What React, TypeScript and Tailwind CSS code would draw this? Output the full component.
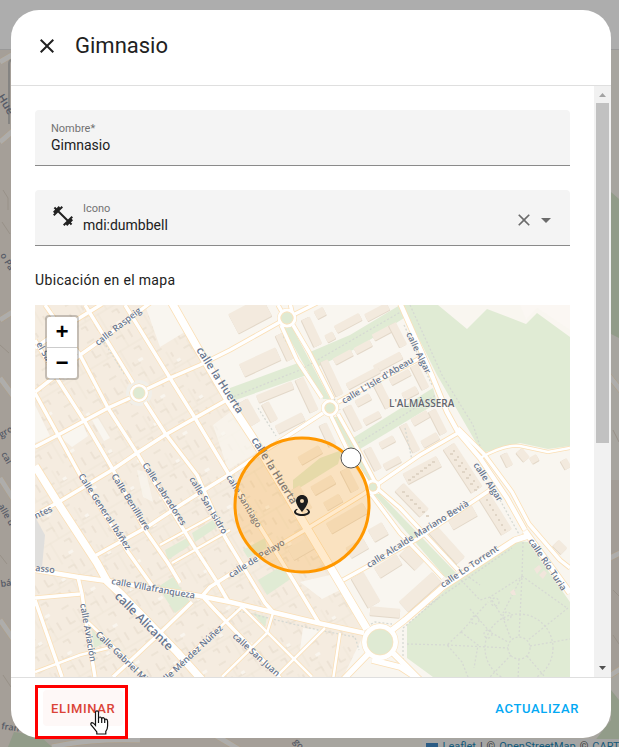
import { useState } from "react"

const roads = [
  { d: "M85 305L133 383M145 402L165 433L197 475L225 537L265 603L273 612", w: 4 },
  { d: "M45 305L80 355L108 408L137 453L150 475L193 545L217 582L228 601", w: 4 },
  { d: "M125 305L170 378L195 418L228 473L262 530L287 570L319 623", w: 4 },
  { d: "M35 393L57 433L80 475L128 552L153 587", w: 4 },
  { d: "M35 340L58 380L85 422L112 468L145 530L168 563L180 583", w: 4 },
  { d: "M35 447L58 435L108 408L130 398M147 389L170 378L200 365L230 350L280 322", w: 4 },
  { d: "M295 314L317 303", w: 4 },
  { d: "M35 392L58 374L80 355L97 343L150 303", w: 4 },
  { d: "M35 348L60 330L102 304", w: 4 },
  { d: "M35 515L57 503L112 470L137 453L165 435L195 418L232 397", w: 4 },
  { d: "M93 557L147 527L185 502L230 474L263 452L323 413M338 402L422 357", w: 4 },
  { d: "M160 545L213 516M172 563L230 530", w: 3 },
  { d: "M35 570L78 577L107 581L150 588L200 596L230 602L272 612L318 623L364 633", w: 5 },
  { d: "M203 595L210 587L232 573L305 530L362 495L420 455L458 433", w: 4 },
  { d: "M35 598L80 594M78 577L82 594L88 635L95 677", w: 4 },
  { d: "M35 600L62 677", w: 4 },
  { d: "M35 672L80 655L108 648", w: 3 },
  { d: "M88 622L145 677", w: 3 },
  { d: "M192 602L158 635L113 677", w: 4 },
  { d: "M242 607L230 618L165 677", w: 3 },
  { d: "M204 598L215 610L285 683", w: 4 },
  { d: "M242 607L295 660L312 677", w: 3 },
  { d: "M273 613L267 633L222 677M325 628L276 677M340 633L333 680", w: 3 },
  { d: "M343 580L417 539L490 490", w: 4 },
  { d: "M400 303L433 378L447 412L458 432L480 458L507 498L525 530", w: 5 },
  { d: "M458 428L484 454L512 492L529 524L560 560L570 568", w: 4 },
  { d: "M480 458Q505 444 520 446L548 452L570 448", w: 3 },
  { d: "M525 531L570 593M372 660L400 667L420 680", w: 6 },
  { d: "M392 630L405 620L443 587L515 540L528 536", w: 6 },
  { d: "M370 652L343 680M392 652L430 690", w: 6 },
  { d: "M278 305L282 312M292 312L290 303M281 325L297 360L322 398M293 325L309 352L333 399M331 416L350 455L368 483M338 414L356 446L375 482", w: 4 },
  { d: "M371 494L400 533L443 578M379 490L400 508L458 570", w: 4 },
  { d: "M35 466L58 503L97 563L107 581L122 595L177 652L202 680", w: 8 },
  { d: "M172 303L197 347L230 403L253 438L302 520L332 570L348 597L367 629", w: 8 },
]

const parks = [
  "402 305 438 305 467 329 487 309 526 324 537 313 570 337 570 446 548 449 520 443 482 453 437 375",
  "517 541 528 542 570 602 570 820 433 820 433 677 407 658 407 625 458 578",
  "230 388 298 363 307 375 230 402",
  "310 352 350 335 400 305 404 318 357 348 317 367",
  "353 438 433 388 437 403 360 449",
  "293 480 320 458 342 450 338 464 293 492",
  "283 327 292 327 330 399 323 399",
  "333 417 338 417 374 480 368 482",
  "374 494 380 494 456 573 446 578",
  "165 550 187 538 190 545 168 560",
  "192 533 213 520 217 527 195 542",
  "158 587 173 577 190 602 175 613",
  "92 630 105 643 94 648",
  "258 580 280 567 292 578 267 595",
  "243 550 265 538 267 548 248 558",
  "253 613 267 617 265 627",
]

// centre x, centre y, length, depth, angle
const buildings = [
  [312, 332, 30, 9, 65], [320, 313, 10, 9, -28], [348, 323, 28, 8, -28], [377, 312, 25, 8, -28],
  [330, 337, 9, 8, -28], [382, 333, 20, 7, -28], [363, 347, 18, 7, -28], [343, 357, 20, 7, -28],
  [398, 335, 25, 8, 63], [332, 378, 38, 8, 65], [388, 362, 30, 8, -28], [363, 378, 36, 7, -28],
  [285, 347, 28, 8, 65], [260, 362, 40, 14, -25], [250, 315, 38, 22, -28], [275, 392, 38, 8, -22],
  [307, 395, 36, 9, 65], [248, 413, 26, 14, 60], [270, 412, 20, 8, 62], [290, 423, 30, 9, -27],
  [328, 435, 24, 8, 65], [310, 455, 24, 9, -30], [353, 418, 26, 9, 63], [363, 400, 16, 7, -28],
  [372, 418, 18, 7, -28], [383, 395, 28, 8, 63], [400, 377, 22, 7, -28], [373, 459, 24, 8, 63],
  [387, 442, 16, 7, -28], [392, 463, 18, 7, -28], [420, 377, 26, 8, 63], [410, 393, 16, 8, -28],
  [420, 418, 18, 8, -30], [438, 422, 26, 8, 63], [430, 440, 18, 8, -30], [410, 438, 30, 8, 63],
  [422, 470, 38, 12, -28], [463, 468, 52, 13, 57], [507, 460, 14, 7, 63], [523, 455, 12, 8, 50],
  [534, 459, 8, 7, -30], [495, 513, 45, 12, 58], [462, 517, 28, 13, -30], [412, 500, 36, 12, 46],
  [447, 545, 42, 11, 48], [412, 558, 22, 13, 45], [420, 592, 45, 14, -42], [560, 547, 12, 9, 45],
  [347, 518, 42, 12, -30], [378, 532, 16, 14, -30], [357, 548, 20, 12, -30], [302, 548, 26, 13, -30],
  [323, 485, 24, 10, -30], [333, 502, 18, 9, -30], [350, 480, 24, 9, 63], [388, 566, 26, 12, -32],
  [366, 590, 34, 14, 60], [385, 612, 30, 9, 5], [566, 464, 10, 7, 60], [300, 500, 26, 14, 60],
]

const streetNames = [
  { t: "calle Raspeig", x: 98, y: 346, a: -38, s: 9 },
  { t: "el Sab", x: 36, y: 344, a: 60, s: 9 },
  { t: "calle la Huerta", x: 196, y: 350, a: 57, s: 11 },
  { t: "calle la Huerta", x: 251, y: 440, a: 58, s: 11 },
  { t: "calle L'Isle d'Abeau", x: 344, y: 404, a: -31, s: 9 },
  { t: "calle Algar", x: 406, y: 334, a: 64, s: 9 },
  { t: "calle Algar", x: 473, y: 465, a: 56, s: 9 },
  { t: "calle Alcalde Mariano Bevià", x: 369, y: 568, a: -32, s: 9 },
  { t: "calle Lo Torrent", x: 443, y: 588, a: -34, s: 9 },
  { t: "calle Río Turia", x: 528, y: 541, a: 56, s: 9 },
  { t: "calle de Pelayo", x: 231, y: 578, a: -32, s: 9 },
  { t: "calle Santiago", x: 226, y: 477, a: 59, s: 9 },
  { t: "calle San Isidro", x: 189, y: 479, a: 59, s: 9 },
  { t: "Calle Labradores", x: 142, y: 465, a: 57, s: 9 },
  { t: "Calle Benilliure", x: 111, y: 476, a: 58, s: 9 },
  { t: "Calle General Ibáñez", x: 78, y: 476, a: 57, s: 9 },
  { t: "calle Villafranqueza", x: 111, y: 584, a: 10, s: 9 },
  { t: "calle Alicante", x: 114, y: 597, a: 45, s: 12 },
  { t: "calle Aviación", x: 80, y: 604, a: 80, s: 9 },
  { t: "Calle Gabriel Miró", x: 95, y: 635, a: 44, s: 9 },
  { t: "calle Méndez Núñez", x: 160, y: 688, a: -43, s: 9 },
  { t: "calle San Juan", x: 232, y: 637, a: 42, s: 9 },
  { t: "ntes", x: 36, y: 519, a: -25, s: 9 },
  { t: "asso", x: 35, y: 571, a: 6, s: 9 },
]

const CLOSE =
  "M19,6.41L17.59,5L12,10.59L6.41,5L5,6.41L10.59,12L5,17.59L6.41,19L12,13.41L17.59,19L19,17.59L13.41,12L19,6.41Z"
const DUMBBELL =
  "M20.57,14.86L22,13.43L20.57,12L17,15.57L8.43,7L12,3.43L10.57,2L9.14,3.43L7.71,2L5.57,4.14L4.14,2.71L2.71,4.14L4.14,5.57L2,7.71L3.43,9.14L2,10.57L3.43,12L7,8.43L15.57,17L12,20.57L13.43,22L14.86,20.57L16.29,22L18.43,19.86L19.86,21.29L21.29,19.86L19.86,18.43L22,16.29L20.57,14.86Z"
const MARKER =
  "M12,2C15.31,2 18,4.66 18,7.95C18,12.41 12,19 12,19C12,19 6,12.41 6,7.95C6,4.66 8.69,2 12,2M12,6A2,2 0 0,0 10,8A2,2 0 0,0 12,10A2,2 0 0,0 14,8A2,2 0 0,0 12,6M20,19C20,21.21 16.42,23 12,23C7.58,23 4,21.21 4,19C4,17.71 5.22,16.56 7.11,15.83L7.75,16.74C6.67,17.19 6,17.81 6,18.5C6,19.88 8.69,21 12,21C15.31,21 18,19.88 18,18.5C18,17.81 17.33,17.19 16.25,16.74L16.89,15.83C18.78,16.56 20,17.71 20,19Z"

function Icon({ path, className }: { path: string; className?: string }) {
  return (
    <svg viewBox="0 0 24 24" className={className} fill="currentColor" aria-hidden="true">
      <path d={path} />
    </svg>
  )
}

function ZoneMap() {
  return (
    <svg
      viewBox="35 305 535 500"
      preserveAspectRatio="xMidYMin slice"
      className="block h-full w-full"
      role="img"
      aria-label="Mapa de la zona"
    >
      <defs>
        <pattern id="roofs" width="53" height="43" patternUnits="userSpaceOnUse" patternTransform="rotate(-31)">
          <path
            d="M4 4v8h6M18 3v5M15 15h8M31 6h7v5M46 4v9M6 23h5v5M20 25v8M41 24h6v5M4 38h8M33 35v4h7"
            fill="none"
            stroke="#e6dbcb"
            strokeWidth="1.1"
          />
          <path d="M14 0v19M28 18v25M0 19h53M38 0v19" stroke="#eee4d6" strokeWidth="0.8" />
          <path d="M19 12h4v3h-4zM39 35h5v3h-5z" fill="#f9f5ee" />
        </pattern>
      </defs>
      <rect x="35" y="305" width="535" height="500" fill="#f9f6f0" />
      <path d="M35 305H172L253 438L302 520L366 630L343 677V805H35Z" fill="#f5ece0" />
      <path d="M35 305H172L253 438L302 520L366 630L343 677V805H35Z" fill="url(#roofs)" />
      <path d="M145 305H170L188 330L160 347ZM35 405L50 436L35 443ZM60 437L83 424L88 436L72 447ZM92 420L98 418L110 438L104 441ZM300 582L330 575L340 590L322 599ZM303 628L322 630L300 650Z" fill="#f9f6f0" />
      <path d="M137 470L146 472L153 502L143 497ZM213 425L233 410L262 449L228 470Z" fill="#f9f6f0" opacity="0.7" />
      <path d="M35 517L45 535L42 567H35Z" fill="#e0dfdd" />
      <path d="M520 305H570V330L545 313L537 308L526 320Z" fill="#fbf7f3" />

      {parks.map((p) => (
        <polygon key={p} points={p} fill="#e0ebd4" />
      ))}
      {buildings.map(([x, y, l, h, a]) => (
        <g key={`${x}-${y}`} transform={`translate(${x} ${y}) rotate(${a})`}>
          <rect x={-l / 2} y={-h / 2 + 1} width={l} height={h} rx="1" fill="#e3d8c9" />
          <rect x={-l / 2} y={-h / 2} width={l} height={h} rx="1" fill="#f3eade" />
        </g>
      ))}
      <g fill="#e0d5c6">
        {[0, 1, 2, 3, 4, 5, 6].map((i) => (
          <g key={i}>
            <path d={`M${450 + i * 4} ${453 + i * 6}h3v2h-3z`} />
            <path d={`M${453 + i * 4} ${450 + i * 6}h2v2h-2z`} />
            <path d={`M${408 + i * 4} ${479 - i * 3}h3v2h-3z`} />
            <path d={`M${402 + i * 4} ${491 + i * 4}h3v2h-3z`} />
            <path d={`M${486 + i * 3} ${499 + i * 5}h2v2h-2z`} />
          </g>
        ))}
      </g>

      {/* footpaths */}
      <g fill="none" stroke="#d6d9d3" strokeWidth="1.3" strokeDasharray="2 2">
        <path d="M410 305L442 375L473 425L482 452M404 325L432 385M230 398L300 370L404 310M300 366L283 336M312 356L340 410M258 408L276 436M355 445L436 395M405 428L412 460M104 342L125 375M466 575L480 585" />
        <path d="M523 542L522 576L519 637M522 576L567 608M461 580L480 600L490 597L520 578M490 597L503 618L511 639M407 644L447 645L508 648M530 646L570 639M522 576L503 613M568 608L528 640M461 632L447 645L462 662L468 677M461 632L478 645L474 668M461 632L488 602M519 659L517 700M511 655L490 677M527 656L545 677M470 609L490 632L508 642" />
        <circle cx="519" cy="648" r="11" />
        <circle cx="519" cy="648" r="34" />
        <circle cx="475" cy="620" r="4" />
        <circle cx="495" cy="602" r="4" />
        <circle cx="507" cy="616" r="4" />
        <circle cx="488" cy="634" r="4" />
        <path d="M235 610L318 630L355 637L359 650M364 628L375 622L392 624M403 660V628L440 597M412 616L512 548M447 555L466 575M500 500L520 536" />
      </g>
      <path d="M510 592l4-3l2 6h-4zM534 569l5-4l3 3l-5 6zM539 575l5-5l3 3l-4 6z" fill="#f1e6dc" />

      <circle cx="139" cy="393" r="13" fill="#f1efe9" />
      <g fill="none" stroke="#fbdfb5" strokeLinejoin="round">
        {roads.map((r) => (
          <path key={r.d} d={r.d} strokeWidth={r.w + 1} />
        ))}
        <circle cx="139" cy="393" r="7" strokeWidth="5" />
        <circle cx="287" cy="318" r="8" strokeWidth="4" />
        <circle cx="330" cy="408" r="7" strokeWidth="4" />
        <circle cx="373" cy="487" r="6" strokeWidth="4" />
        <circle cx="380" cy="642" r="15" strokeWidth="7" />
      </g>
      <g fill="none" stroke="#ffffff" strokeLinejoin="round">
        {roads.map((r) => (
          <path key={r.d} d={r.d} strokeWidth={r.w - 0.5} />
        ))}
        <circle cx="139" cy="393" r="7" strokeWidth="4" />
        <circle cx="287" cy="318" r="8" strokeWidth="3" />
        <circle cx="330" cy="408" r="7" strokeWidth="3" />
        <circle cx="373" cy="487" r="6" strokeWidth="3" />
        <circle cx="380" cy="642" r="15" strokeWidth="6" />
      </g>
      <g fill="#dfead3" stroke="#fce0b6" strokeWidth="0.7">
        <circle cx="139" cy="393" r="6" />
        <circle cx="287" cy="318" r="6" />
        <circle cx="330" cy="408" r="5" />
        <circle cx="373" cy="487" r="4" />
        <circle cx="380" cy="642" r="13" />
      </g>

      <g
        fontFamily="'Open Sans', 'Noto Sans', sans-serif"
        fontWeight="600"
        fill="#68768e"
        stroke="#ffffff"
        strokeOpacity="0.5"
        strokeWidth="1"
        paintOrder="stroke"
      >
        {streetNames.map((n) => (
          <text key={`${n.t}${n.x}`} fontSize={n.s} transform={`translate(${n.x} ${n.y}) rotate(${n.a})`}>
            {n.t}
          </text>
        ))}
        <text x="389" y="407" fontSize="10" fill="#62656d">
          L'ALMÀSSERA
        </text>
      </g>

      <circle cx="302" cy="505" r="67" fill="#ff9800" fillOpacity="0.2" stroke="#ff9800" strokeWidth="3" />
      <path d={MARKER} transform="translate(290 493)" fill="#1c1c1c" />
      <circle cx="351" cy="458" r="10" fill="#ffffff" stroke="#555555" />
    </svg>
  )
}

function PageBehind() {
  return (
    <svg
      viewBox="0 0 619 747"
      preserveAspectRatio="xMinYMin slice"
      className="absolute inset-0 h-full w-full"
      aria-hidden="true"
    >
      <rect width="619" height="747" fill="#a59f98" />
      <rect x="300" y="50" width="319" height="697" fill="#a7a59f" />
      <rect x="611" y="480" width="8" height="190" fill="#a39d96" />
      <path d="M611 192L619 199V338L611 334ZM611 690L619 700V747H590L611 720ZM8 747L14 732L40 736L52 747Z" fill="#929c89" />
      <g fill="none" stroke="#b09f86" strokeWidth="6">
        <path d="M0 142L14 130M0 62L12 55M0 320L14 311M0 378L14 397M0 478L14 500M0 620L14 640M606 372L622 392M606 560L622 552M606 678L622 668M52 747Q90 738 140 740M215 735L240 750" />
      </g>
      <g fill="none" stroke="#aeadab" strokeWidth="5">
        <path d="M0 142L14 130M0 62L12 55M0 320L14 311M0 378L14 397M0 478L14 500M0 620L14 640M606 372L622 392M606 560L622 552M606 678L622 668M52 747Q90 738 140 740M215 735L240 750" />
      </g>
      <path d="M3 190l5 8v12M2 222l8 12M0 345l9 8M0 555l7 9M3 675l8 12M613 430l6 12M613 590l6 6M613 635l6 9" fill="none" stroke="#989188" />
      <rect width="619" height="49" fill="#adadad" />
      <rect y="49" width="619" height="1" fill="#999999" />
      <path d="M12 60Q9 60 9 64V124" fill="none" stroke="#858482" strokeWidth="2" />
      <g fontFamily="'Open Sans', 'Noto Sans', sans-serif" fontWeight="600" fill="#555a66" fontSize="9">
        <text transform="translate(-3 97) rotate(58)" fontSize="11">Hue</text>
        <text transform="translate(0 255) rotate(60)">o Pa</text>
        <text transform="translate(1 438) rotate(-30)">gro</text>
        <text transform="translate(1 454) rotate(60)">cal</text>
        <text transform="translate(-2 506) rotate(60)">alle d</text>
        <text transform="translate(1 587) rotate(-8)">bá</text>
        <text transform="translate(1 729) rotate(8)">fran</text>
        <text transform="translate(293 742) rotate(50)">go</text>
      </g>
    </svg>
  )
}

export default function App() {
  const [name, setName] = useState("Gimnasio")
  const [icon, setIcon] = useState("mdi:dumbbell")

  return (
    <div className="relative flex h-screen flex-col overflow-hidden pt-[10px] pr-2 pb-[9px] pl-[11px] font-[Roboto,sans-serif] text-[#212121]">
      <PageBehind />
      <div className="absolute -right-3 -bottom-2 flex h-4 items-center gap-1 bg-[#a5a5a4] px-1 text-[11px] whitespace-nowrap text-[#333]">
        <svg viewBox="0 0 12 8" className="h-2 w-3" aria-hidden="true">
          <path fill="#2b5b84" d="M0 0h12v4H0z" />
          <path fill="#8a7a20" d="M0 4h12v3H0z" />
        </svg>
        <a href="#leaflet" className="text-[#155a7a]">Leaflet</a>
        <span>|</span>
        <span>©</span>
        <a href="#osm" className="text-[#155a7a]">OpenStreetMap</a>
        <span>©</span>
        <a href="#carto" className="text-[#155a7a]">CARTO</a>
      </div>

      <div role="dialog" aria-labelledby="zone-title" className="relative flex min-h-0 flex-1 flex-col rounded-[28px] bg-white">
        <header className="flex items-center gap-1 border-b border-[#dfdfdf] px-3 pt-3 pb-[15px]">
          <button type="button" aria-label="Cerrar" className="flex size-12 items-center justify-center">
            <Icon path={CLOSE} className="size-6" />
          </button>
          <h1 id="zone-title" className="text-[22px] leading-7">Gimnasio</h1>
        </header>

        <div className="flex min-h-0 flex-1">
          <main className="min-w-0 flex-1 overflow-hidden px-6 pt-6">
            <div className="flex h-14 flex-col rounded-t border-b border-[#8a8a8a] bg-[#f4f4f4] px-4 pt-[11px]">
              <label htmlFor="zone-name" className="text-[11px] leading-4 text-[#727272]">Nombre*</label>
              <input
                id="zone-name"
                value={name}
                onChange={(e) => setName(e.target.value)}
                className="w-full bg-transparent text-sm leading-4 outline-none"
              />
            </div>

            <div className="mt-6 flex h-14 rounded-t border-b border-[#8a8a8a] bg-[#f4f4f4] pr-3 pl-4">
              <Icon path={DUMBBELL} className="mt-[14px] mr-2 size-6 shrink-0" />
              <div className="flex min-w-0 flex-1 flex-col pt-[11px]">
                <label htmlFor="zone-icon" className="text-[11px] leading-4 text-[#727272]">Icono</label>
                <input
                  id="zone-icon"
                  value={icon}
                  onChange={(e) => setIcon(e.target.value)}
                  className="w-full bg-transparent text-sm leading-4 outline-none"
                />
              </div>
              <div className="flex items-center pt-1 text-[#6b6b6b]">
                <button type="button" aria-label="Borrar" onClick={() => setIcon("")}>
                  <Icon path={CLOSE} className="size-5" />
                </button>
                <button type="button" aria-label="Abrir lista">
                  <Icon path="M7,10L12,15L17,10H7Z" className="size-6" />
                </button>
              </div>
            </div>

            <h2 className="mt-6 text-sm leading-5 tracking-wide">Ubicación en el mapa</h2>
            <div className="relative mt-[15px] h-[500px]">
              <ZoneMap />
              <div className="absolute top-[10px] left-[10px] flex flex-col rounded border-2 border-black/20 bg-white bg-clip-padding font-['Liberation_Mono',monospace] text-[22px] font-bold text-black">
                <button type="button" aria-label="Acercar" className="flex h-[31px] w-[30px] items-center justify-center border-b border-[#ccc] pt-0.5">+</button>
                <button type="button" aria-label="Alejar" className="flex h-[30px] w-[30px] items-center justify-center pt-0.5">−</button>
              </div>
            </div>
          </main>

          <div aria-hidden="true" className="flex w-[17px] flex-col items-center justify-between bg-[#f1f1f1]">
            <svg viewBox="0 0 17 17" className="size-[17px] shrink-0">
              <path d="M5 11h7L8.500 7z" fill="#a3a3a3" />
            </svg>
            <div className="flex w-full flex-1 justify-center">
              <div className="h-[61%] w-[13px] bg-[#c1c1c1]"></div>
            </div>
            <svg viewBox="0 0 17 17" className="size-[17px] shrink-0">
              <path d="M5 6h7L8.500 10z" fill="#505050" />
            </svg>
          </div>
        </div>

        <footer className="flex items-center justify-between border-t border-[#dfdfdf] py-3 pr-6 pl-8">
          <div className="relative">
            <button type="button" className="h-9 rounded bg-[#fef8f7] px-2 pt-0.5 text-[13px] font-medium tracking-wider text-[#db4437]">
              ELIMINAR
            </button>
            <div className="pointer-events-none absolute -top-[5px] -right-[5px] -bottom-[13px] -left-2 border-3 border-[#ff0000]"></div>
            <svg viewBox="0 0 19 25" className="pointer-events-none absolute top-5 left-[47px] h-[25px] w-[19px]" aria-hidden="true">
              <path
                d="M5.500 2.200Q5.500 .8 7 .8Q8.500 .8 8.500 2.200V9Q8.600 7 10 7Q11.600 7 11.700 9.200Q12 7.500 13.200 7.700Q14.700 8 14.700 10Q15 8.800 16.200 9.200Q17.600 9.600 17.600 11.500V16Q17.600 19 15.800 21.300V24H6.800V22L3.600 17.800L.9 14.600Q.5 13 2 12.700Q3.200 12.600 5.500 15.300Z"
                fill="#ffffff"
                stroke="#111111"
                strokeWidth="1.200"
              />
              <path d="M8.500 8.500V13M11.700 9V13M14.700 10V13" stroke="#111111" strokeWidth="1.200" />
            </svg>
          </div>
          <button type="button" className="h-9 rounded px-2 pt-0.5 text-[13px] font-medium tracking-wider text-[#03a9f4]">
            ACTUALIZAR
          </button>
        </footer>
      </div>
    </div>
  )
}
